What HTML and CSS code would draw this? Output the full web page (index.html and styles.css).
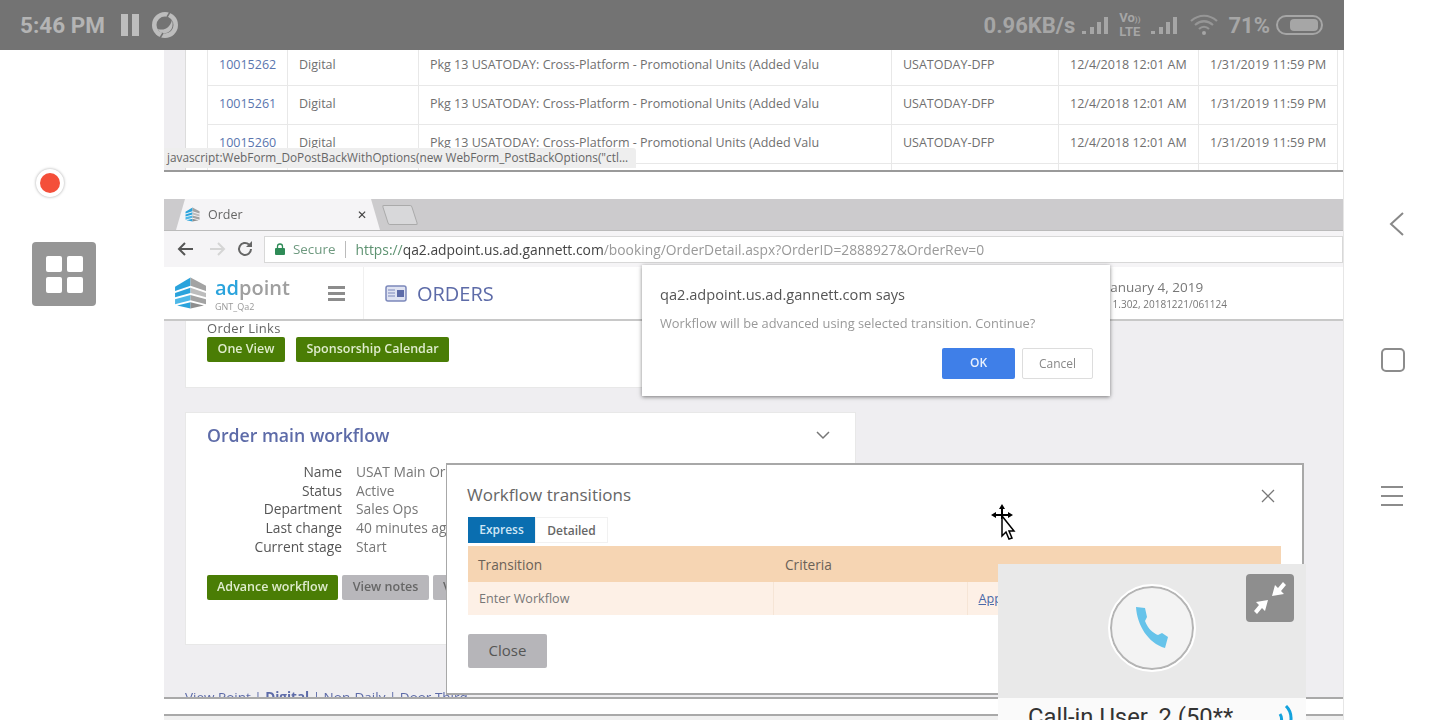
FILE: index.html
```html
<!DOCTYPE html>
<html lang="en">
<head>
  <meta charset="UTF-8" />
  <meta name="viewport" content="width=device-width, initial-scale=1.0" />
  <title>Screen recording</title>
  <link rel="stylesheet" href="styles.css">
</head>
<body>
  <svg class="defs" width="0" height="0">
    <symbol id="adlogo" viewBox="0 0 32 32">
      <path d="M1 10 16 1l0 8L1 14z" fill="#2aa3dc"/>
      <path d="M16 1l15 8v5L16 9z" fill="#a3a3a3"/>
      <path d="M1 16 16 11l0 5L1 20z" fill="#2aa3dc"/>
      <path d="M16 11l15 5v4L16 16z" fill="#bdbdbd"/>
      <path d="M1 22 16 18v5L1 27z" fill="#4db8e8"/>
      <path d="M16 18l15 4v5L16 23z" fill="#a3a3a3"/>
      <path d="M3 28 16 25v6z" fill="#2aa3dc"/>
      <path d="M16 25l13 3-13 3z" fill="#8e8e8e"/>
    </symbol>
    <symbol id="bars" viewBox="0 0 28 20">
      <rect x="1" y="16" width="4" height="3"/>
      <rect x="9" y="12" width="4" height="7"/>
      <rect x="16" y="7" width="4" height="12"/>
      <rect x="23" y="2" width="4" height="17"/>
    </symbol>
  </svg>

  <div class="screen">
    <div class="main">
      <header class="statusbar">
        <span class="clock">5:46 PM</span>
        <span class="pause"><i></i><i></i></span>
        <svg class="sync" width="26" height="26" viewBox="0 0 26 26">
          <circle cx="13" cy="13" r="13" fill="#bdbdbd"/>
          <circle cx="13" cy="13" r="8.500" fill="#737373"/>
          <path d="M6 17c6 2 12-1 14-9 2 7-1 12-6 13-4 1-7-1-8-4z" fill="#bdbdbd"/>
          <path d="M15 5l3-5M11 21l-3 5" stroke="#737373" stroke-width="1.500"/>
        </svg>
        <span class="speed">0.96KB/s</span>
        <svg class="sig" width="28" height="20"><use href="#bars"/></svg>
        <span class="volte">Vo<small>))</small><br>LTE</span>
        <svg class="sig sig-two" width="28" height="20"><use href="#bars"/></svg>
        <svg class="wifi" width="30" height="24" viewBox="0 0 30 24" fill="none" stroke="#969696" stroke-width="2.200">
          <path d="M1 8c8-7 18-7 26 0"/>
          <path d="M5 12c6-5 12-5 18 0"/>
          <path d="M9 16c3-3 7-3 10 0"/>
          <circle cx="14" cy="20" r="2" fill="#a6a6a6" stroke="none"/>
        </svg>
        <span class="percent">71%</span>
        <span class="battery"><i></i></span>
      </header>

      <div class="workarea">
        <aside class="left-rail">
          <span class="record"><i></i></span>
          <span class="apps"><i></i><i></i><i></i><i></i></span>
        </aside>

        <div class="stage">
          <div class="capture">
            <section class="orders-list">
              <table class="lines">
                <colgroup>
                  <col class="c1"><col class="c2"><col class="c3"><col class="c4"><col class="c5"><col class="c6">
                </colgroup>
                <tr>
                  <td><a>10015262</a></td><td>Digital</td>
                  <td>Pkg 13 USATODAY: Cross-Platform - Promotional Units (Added Valu</td>
                  <td>USATODAY-DFP</td><td>12/4/2018 12:01 AM</td><td>1/31/2019 11:59 PM</td>
                </tr>
                <tr>
                  <td><a>10015261</a></td><td>Digital</td>
                  <td>Pkg 13 USATODAY: Cross-Platform - Promotional Units (Added Valu</td>
                  <td>USATODAY-DFP</td><td>12/4/2018 12:01 AM</td><td>1/31/2019 11:59 PM</td>
                </tr>
                <tr>
                  <td><a>10015260</a></td><td>Digital</td>
                  <td>Pkg 13 USATODAY: Cross-Platform - Promotional Units (Added Valu</td>
                  <td>USATODAY-DFP</td><td>12/4/2018 12:01 AM</td><td>1/31/2019 11:59 PM</td>
                </tr>
                <tr><td></td><td></td><td></td><td></td><td></td><td></td></tr>
              </table>
              <div class="link-hint">javascript:WebForm_DoPostBackWithOptions(new WebForm_PostBackOptions("ctl...</div>
            </section>

            <div class="browser">
              <div class="tabstrip">
                <div class="tab">
                  <svg class="favicon" width="15" height="17"><use href="#adlogo"/></svg>
                  <span class="tab-title">Order</span>
                  <span class="tab-close">✕</span>
                </div>
                <span class="newtab"></span>
              </div>

              <div class="toolbar">
                <svg class="nav-icon" width="18" height="16" viewBox="0 0 18 16" fill="none" stroke="#555" stroke-width="2">
                  <path d="M16 8H2M8 2 2 8l6 6"/>
                </svg>
                <svg class="nav-icon" width="18" height="16" viewBox="0 0 18 16" fill="none" stroke="#d5d5d5" stroke-width="2">
                  <path d="M2 8h14M10 2l6 6-6 6"/>
                </svg>
                <svg class="nav-icon nav-reload" width="18" height="18" viewBox="0 0 18 18" fill="none" stroke="#666" stroke-width="2">
                  <path d="M15 9a6 6 0 1 1-2-4.500"/>
                  <path d="M16 1v6h-6z" fill="#666" stroke="none"/>
                </svg>
                <div class="omnibox">
                  <svg width="10" height="12" viewBox="0 0 10 12">
                    <path d="M2.500 5V3.500a2.500 2.500 0 0 1 5 0V5" fill="none" stroke="#2e8b57" stroke-width="1.300"/>
                    <rect y="5" width="10" height="7" rx="1" fill="#2e8b57"/>
                  </svg>
                  <span class="secure">Secure</span>
                  <span class="url"><b>https://</b><em>qa2.adpoint.us.ad.gannett.com</em>/booking/OrderDetail.aspx?OrderID=2888927&amp;OrderRev=0</span>
                </div>
              </div>

              <div class="app-header">
                <svg class="logo" width="33" height="34"><use href="#adlogo"/></svg>
                <div class="brand">
                  <div class="brand-name"><span>ad</span>point</div>
                  <div class="brand-sub">GNT_Qa2</div>
                </div>
                <span class="burger"><i></i><i></i><i></i></span>
                <svg class="orders-icon" width="22" height="17" viewBox="0 0 22 17">
                  <rect x="1" y="1" width="20" height="15" rx="2" fill="#dfe3f2" stroke="#7c88bb" stroke-width="1.500"/>
                  <rect x="12" y="5" width="7" height="7" fill="#5d6ba8"/>
                  <path d="M3 5h7M3 8h7M3 11h7" stroke="#7c88bb"/>
                </svg>
                <span class="orders-title">ORDERS</span>
                <div class="session">
                  <div class="session-date">January 4, 2019</div>
                  <div class="session-build">1.302, 20181221/061124</div>
                </div>
              </div>

              <div class="page">
                <section class="card card-links">
                  <h4>Order Links</h4>
                  <div class="btn-row">
                    <a class="btn btn-green btn-oneview">One View</a>
                    <a class="btn btn-green btn-calendar">Sponsorship Calendar</a>
                  </div>
                </section>

                <section class="card card-workflow">
                  <div class="card-head">
                    <h3>Order main workflow</h3>
                    <svg width="14" height="9" viewBox="0 0 14 9" fill="none" stroke="#777" stroke-width="1.500">
                      <path d="M1 1l6 6 6-6"/>
                    </svg>
                  </div>
                  <dl class="details">
                    <dt>Name</dt><dd>USAT Main Order</dd>
                    <dt>Status</dt><dd>Active</dd>
                    <dt>Department</dt><dd>Sales Ops</dd>
                    <dt>Last change</dt><dd>40 minutes ago</dd>
                    <dt>Current stage</dt><dd>Start</dd>
                  </dl>
                  <div class="btn-row btn-row-tight">
                    <a class="btn btn-green btn-advance">Advance workflow</a>
                    <a class="btn btn-gray btn-notes">View notes</a>
                    <a class="btn btn-gray">View</a>
                  </div>
                </section>

                <div class="page-foot">View Point | <b>Digital</b> | Non-Daily | Door Third</div>

                <div class="modal">
                  <div class="modal-head">
                    <h3>Workflow transitions</h3>
                    <svg class="modal-x" width="14" height="14" viewBox="0 0 14 14" stroke="#777" stroke-width="1.300">
                      <path d="M1 1l12 12M13 1 1 13"/>
                    </svg>
                  </div>
                  <div class="tabs">
                    <span class="pill pill-on">Express</span>
                    <span class="pill">Detailed</span>
                  </div>
                  <table class="transitions">
                    <colgroup><col class="t1"><col class="t2"><col></colgroup>
                    <tr><th>Transition</th><th>Criteria</th><th></th></tr>
                    <tr><td>Enter Workflow</td><td></td><td><a>Apply</a></td></tr>
                  </table>
                  <a class="btn-close">Close</a>
                </div>
              </div>

              <div class="alert">
                <div class="alert-title">qa2.adpoint.us.ad.gannett.com says</div>
                <div class="alert-text">Workflow will be advanced using selected transition. Continue?</div>
                <div class="alert-actions">
                  <a class="alert-ok">OK</a>
                  <a class="alert-cancel">Cancel</a>
                </div>
              </div>
            </div>

            <div class="tray"></div>
          </div>

          <svg class="cursor" width="28" height="38" viewBox="0 0 28 38">
            <path d="M12 1l-3 5h2v5H6V9l-5 3 5 3v-2h5v3h2v-3h5v2l5-3-5-3v2h-5V6h2z" fill="#000"/>
            <path d="M12 13v20l4-4 3 7 3-1-3-7h5z" fill="#fff" stroke="#000" stroke-width="1.500"/>
          </svg>

          <div class="call">
            <div class="call-top">
              <span class="call-ring">
                <svg width="32" height="42" viewBox="0 0 32 42">
                  <path d="M0 0 9 1l2 9-2 4c3 8 8 12 13 14l4-2 6 4-3 11C12 36 1 18 0 0z" fill="#66c3ea"/>
                </svg>
              </span>
              <span class="call-shrink">
                <svg width="34" height="34" viewBox="0 0 34 34" fill="#fff">
                  <path d="M19 15 22 4l3 3 5-6 3 3-5 6 3 3z"/>
                  <path d="M15 19 12 30l-3-3-5 6-3-3 5-6-3-3z"/>
                </svg>
              </span>
            </div>
            <div class="call-name">
              <span>Call-in User_2 (50**</span>
              <svg width="16" height="20" viewBox="0 0 16 20" fill="none" stroke="#13a2dd" stroke-width="3">
                <path d="M2 9c2 3 2 7 0 11"/>
                <path d="M8 1c5 5 6 12 4 19"/>
              </svg>
            </div>
          </div>
        </div>
      </div>
    </div>

    <nav class="nav-rail">
      <svg width="16" height="24" viewBox="0 0 16 24" fill="none" stroke="#888" stroke-width="2">
        <path d="M14 1 2 12l12 11"/>
      </svg>
      <span class="nav-square"></span>
      <span class="nav-menu"><i></i><i></i><i></i></span>
    </nav>
  </div>
</body>
</html>
```

FILE: styles.css
```css
* {
  box-sizing: border-box;
}

html,
body {
  margin: 0;
  padding: 0;
  height: 100%;
  overflow: hidden;
  background-color: #fff;
}

body {
  font-family: "Open Sans", Arial, sans-serif;
  color: #555;
}

.defs {
  position: absolute;
}

.screen {
  display: flex;
  width: 1440px;
  height: 720px;
  overflow: hidden;
}

.main {
  display: flex;
  flex-direction: column;
  width: 1344px;
}

/* status bar */
.statusbar {
  display: flex;
  align-items: center;
  flex: none;
  height: 50px;
  padding: 0 21px 0 20px;
  background-color: #737373;
  color: #b4b4b4;
  font-family: Roboto, sans-serif;
  font-weight: 700;
}

.clock {
  font-size: 22.500px;
}

.pause {
  display: flex;
  gap: 4px;
  margin-left: 16px;
}

.pause i {
  width: 7px;
  height: 22px;
  background-color: #bdbdbd;
}

.sync {
  margin-left: 13px;
}

.speed {
  margin-left: auto;
  font-size: 22px;
  color: #a6a6a6;
}

.sig {
  margin-left: 6px;
  fill: #a6a6a6;
}

.sig-two {
  margin-left: 10px;
}

.volte {
  margin-left: 10px;
  font-size: 13px;
  line-height: 12px;
  color: #a6a6a6;
}

.volte small {
  font-size: 8px;
}

.wifi {
  margin-left: 12px;
}

.percent {
  margin-left: 8px;
  font-size: 22px;
  color: #a6a6a6;
}

.battery {
  display: flex;
  align-items: center;
  justify-content: flex-end;
  width: 47px;
  height: 20px;
  margin-left: 6px;
  padding-right: 3px;
  border: 2px solid #a6a6a6;
  border-radius: 10px;
}

.battery i {
  width: 28px;
  height: 12px;
  border-radius: 4px;
  background-color: #a6a6a6;
}

.workarea {
  display: flex;
  flex: 1;
  min-height: 0;
}

/* left rail */
.left-rail {
  display: flex;
  flex-direction: column;
  flex: none;
  width: 164px;
  padding: 119px 0 0 32px;
}

.record {
  display: flex;
  align-items: center;
  justify-content: center;
  width: 28px;
  height: 28px;
  margin-left: 4px;
  border-radius: 50%;
  background-color: #fff;
  box-shadow: 0 0 3px rgba(0, 0, 0, 0.35);
}

.record i {
  width: 20px;
  height: 20px;
  border-radius: 50%;
  background-color: #f44f3a;
}

.apps {
  display: grid;
  grid-template-columns: 16px 16px;
  grid-auto-rows: 16px;
  gap: 5px;
  align-content: center;
  justify-content: center;
  width: 64px;
  height: 64px;
  margin-top: 45px;
  border-radius: 4px;
  background-color: #969696;
}

.apps i {
  border-radius: 2px;
  background-color: #fff;
}

/* captured page */
.stage {
  position: relative;
  flex: 1;
  min-width: 0;
  border-right: 1px solid #e6e6e6;
}

.capture {
  display: flex;
  flex-direction: column;
  height: 100%;
  overflow: hidden;
  filter: blur(0.5px);
}

.orders-list {
  position: relative;
  flex: none;
  height: 122px;
  padding-left: 43px;
  overflow: hidden;
  border-bottom: 2px solid #9a9a9a;
  background: linear-gradient(to right, #efeef1 21px, #dcdcdc 21px, #dcdcdc 22px, #fff 22px);
  font-size: 12.500px;
}

.lines {
  width: 1130px;
  margin-top: -4px;
  border-collapse: collapse;
  table-layout: fixed;
}

.lines td {
  height: 39px;
  padding: 0 11px 3px;
  border: 1px solid #e8e8e8;
  color: #707070;
  white-space: nowrap;
  overflow: hidden;
}

.lines a {
  color: #5a75ae;
}

.c1 { width: 80px; }
.c2 { width: 131px; }
.c3 { width: 473px; }
.c4 { width: 167px; }
.c5 { width: 140px; }
.c6 { width: 139px; }

.link-hint {
  position: absolute;
  left: 0;
  bottom: 2px;
  width: 472px;
  height: 20px;
  padding: 1px 0 0 3px;
  border-top-right-radius: 3px;
  background-color: #eeeeee;
  color: #666;
  font-size: 11.800px;
  white-space: nowrap;
}

.browser {
  position: relative;
  display: flex;
  flex-direction: column;
  flex: none;
  height: 498px;
  margin-top: 27px;
}

.tabstrip {
  display: flex;
  align-items: flex-end;
  flex: none;
  height: 32px;
  padding-left: 12px;
  background-color: #cccbcd;
  border-bottom: 1px solid #bbb;
}

.tab {
  display: flex;
  align-items: center;
  width: 204px;
  height: 31px;
  padding: 0 0 0 9px;
  background-color: #f5f4f6;
  clip-path: polygon(0 100%, 9px 0, 195px 0, 100% 100%);
  font-size: 12.500px;
}

.favicon {
  flex: none;
}

.tab-title {
  margin-left: 8px;
  color: #666;
}

.tab-close {
  margin-left: 114px;
  color: #444;
  font-size: 12px;
}

.newtab {
  width: 30px;
  height: 20px;
  margin: 0 0 5px 5px;
  border: 1px solid #aaa;
  border-radius: 2px;
  background-color: #d8d8da;
  transform: skewX(18deg);
}

.toolbar {
  display: flex;
  align-items: center;
  flex: none;
  gap: 13px;
  height: 36px;
  padding-left: 13px;
  background-color: #f5f4f6;
}

.nav-reload {
  margin-left: -3px;
}

.omnibox {
  display: flex;
  align-items: center;
  flex: 1;
  height: 27px;
  margin-left: -3px;
  padding-left: 10px;
  border: 1px solid #d8d8d8;
  background-color: #fff;
  font-size: 13px;
  white-space: nowrap;
}

.secure {
  margin-left: 8px;
  padding-right: 10px;
  border-right: 1px solid #bbb;
  color: #6f9a80;
  font-size: 13.400px;
  line-height: 17px;
}

.url {
  margin-left: 9px;
  color: #999;
  font-size: 13.850px;
}

.url b {
  color: #5d9271;
  font-weight: 400;
}

.url em {
  color: #444;
  font-style: normal;
}

.app-header {
  display: flex;
  align-items: center;
  flex: none;
  height: 54px;
  padding: 0 116px 0 10px;
  border-bottom: 2px solid #c8c8c8;
  background-color: #fff;
}

.brand {
  margin-left: 8px;
}

.brand-name {
  color: #9f9f9f;
  font-size: 20px;
  font-weight: 600;
  line-height: 27px;
}

.brand-name span {
  color: #2aa3dc;
}

.brand-sub {
  color: #999;
  font-size: 9px;
  line-height: 12px;
}

.burger {
  display: flex;
  flex-direction: column;
  gap: 3px;
  margin-left: 38px;
  padding-right: 18px;
  border-right: 1px solid #f0f0f0;
  height: 52px;
  justify-content: center;
}

.burger i {
  width: 17px;
  height: 3px;
  background-color: #8c8c8c;
}

.orders-icon {
  margin-left: 21px;
}

.orders-title {
  margin-left: 10px;
  color: #5d6ba8;
  font-size: 20px;
}

.session {
  margin-left: auto;
  padding-top: 4px;
  color: #777;
}

.session-date {
  margin-left: -6px;
  font-size: 13.500px;
  line-height: 18px;
  white-space: nowrap;
}

.session-build {
  font-size: 10px;
  line-height: 16px;
}

.page {
  position: relative;
  flex: 1;
  min-height: 0;
  padding-left: 21px;
  overflow: hidden;
  background-color: #efeef1;
}

.card {
  width: 671px;
  padding: 0 21px;
  border: 1px solid #e8e8e8;
  background-color: #fff;
}

.card-links {
  height: 67px;
  border-top: none;
}

.card-links h4 {
  margin: 0 0 2px;
  color: #666;
  font-size: 13px;
  font-weight: 400;
  letter-spacing: 0.3px;
  line-height: 14px;
}

.btn-row {
  display: flex;
  gap: 11px;
}

.btn-row-tight {
  gap: 4px;
  margin-top: 18px;
  white-space: nowrap;
}

.btn {
  display: block;
  height: 25px;
  padding: 0 10px;
  border-radius: 2px;
  font-size: 12.500px;
  font-weight: 600;
  line-height: 24px;
  text-align: center;
  white-space: nowrap;
}

.btn-green {
  background-color: #4a7d05;
  color: #dfeccd;
}

.btn-gray {
  background-color: #b8b7bb;
  color: #666;
}

.btn-oneview { width: 78px; }
.btn-calendar { width: 153px; }
.btn-advance { width: 131px; }
.btn-notes { width: 87px; }

.card-workflow {
  height: 233px;
  margin-top: 24px;
}

.card-head {
  display: flex;
  align-items: center;
  justify-content: space-between;
  height: 44px;
  padding-right: 4px;
}

.card-head h3 {
  margin: 0;
  color: #5d6ba8;
  font-size: 17.700px;
  font-weight: 600;
  white-space: nowrap;
}

.details {
  display: grid;
  grid-template-columns: 135px 1fr;
  column-gap: 14px;
  margin: 6px 0 0;
  font-size: 13.800px;
  line-height: 18.700px;
}

.details dt {
  color: #555;
  text-align: right;
}

.details dd {
  margin: 0;
  color: #777;
}

.page-foot {
  margin: 43px 0 0;
  color: #5d6ba8;
  font-size: 13.500px;
  white-space: nowrap;
}

/* workflow dialog */
.modal {
  position: absolute;
  left: 282px;
  top: 142px;
  width: 858px;
  height: 232px;
  padding: 0 20px 0 21px;
  border: 2px solid #a8a8a8;
  border-left-width: 1px;
  background-color: #fff;
}

.modal-head {
  display: flex;
  align-items: center;
  justify-content: space-between;
  height: 52px;
  padding: 6px 7px 0 0;
  margin-left: -1px;
}

.modal-head h3 {
  margin: 0;
  color: #666;
  font-size: 17px;
  font-weight: 400;
}

.modal-x {
  margin-top: 4px;
}

.tabs {
  display: flex;
  height: 26px;
}

.pill {
  width: 73px;
  background-color: #fff;
  border: 1px solid #f1f1f1;
  color: #666;
  font-size: 12px;
  font-weight: 600;
  line-height: 25px;
  text-align: center;
}

.pill-on {
  width: 67px;
  border: none;
  background-color: #0a6eb0;
  color: #cfe6f5;
}

.transitions {
  width: 813px;
  margin-top: 3px;
  border-collapse: collapse;
  table-layout: fixed;
  font-size: 13.700px;
}

.t1 { width: 305px; }
.t2 { width: 194px; }

.transitions th {
  height: 36px;
  padding: 0 10px;
  background-color: #f6d5b3;
  color: #6b6258;
  font-weight: 400;
  text-align: left;
}

.transitions th:nth-child(2) {
  padding-left: 12px;
}

.transitions td {
  height: 33px;
  padding: 0 10px 0 11px;
  border-right: 1px solid #f6e5d6;
  background-color: #fdf0e6;
  color: #777;
  font-size: 12.600px;
}

.transitions a {
  color: #4a68a8;
  text-decoration: underline;
}

.btn-close {
  display: block;
  width: 79px;
  height: 34px;
  margin-top: 19px;
  border-radius: 2px;
  background-color: #b6b5b9;
  color: #555;
  font-size: 15px;
  line-height: 33px;
  text-align: center;
}

/* browser alert */
.alert {
  position: absolute;
  left: 478px;
  top: 66px;
  width: 468px;
  height: 131px;
  padding: 20px 17px 0 18px;
  background-color: #fff;
  box-shadow: 0 1px 4px rgba(0, 0, 0, 0.5);
}

.alert-title {
  color: #555;
  font-size: 14.600px;
  line-height: 18px;
}

.alert-text {
  margin-top: 12px;
  color: #999;
  font-size: 12.850px;
  line-height: 17px;
}

.alert-actions {
  display: flex;
  justify-content: flex-end;
  gap: 7px;
  margin-top: 16px;
  font-size: 12px;
  line-height: 29px;
  text-align: center;
}

.alert-ok {
  width: 73px;
  height: 31px;
  border-radius: 2px;
  background-color: #3f7fe8;
  color: #e8f0fd;
  font-weight: 600;
}

.alert-cancel {
  width: 71px;
  height: 31px;
  border: 1px solid #ddd;
  border-radius: 2px;
  color: #888;
}

.tray {
  flex: none;
  height: 15px;
  border-top: 2px solid #a9a9a9;
  background-color: #fff;
}

.tray::after {
  content: "";
  display: block;
  height: 21px;
  margin-top: 15px;
  border-top: 2px solid #a9a9a9;
  background-color: #f0f0f0;
}

/* pointer and call widget */
.cursor {
  position: absolute;
  left: 826px;
  top: 453px;
}

.call {
  position: absolute;
  left: 834px;
  top: 514px;
  width: 308px;
  height: 156px;
  overflow: hidden;
  background-color: #fafafa;
}

.call-top {
  position: relative;
  display: flex;
  align-items: center;
  justify-content: center;
  height: 134px;
  background-color: #e9e9e9;
}

.call-ring {
  display: flex;
  align-items: center;
  justify-content: center;
  width: 84px;
  height: 84px;
  margin-top: -6px;
  border: 2px solid #b4b4b4;
  border-radius: 50%;
  outline: 2px solid #fff;
  background-color: #f3f3f3;
}

.call-shrink {
  position: absolute;
  top: 10px;
  right: 12px;
  display: flex;
  align-items: center;
  justify-content: center;
  width: 48px;
  height: 48px;
  border-radius: 4px;
  background-color: #8e8e8e;
}

.call-name {
  display: flex;
  justify-content: space-between;
  align-items: flex-start;
  padding: 7px 12px 0 30px;
  color: #333;
  font-family: Roboto, sans-serif;
  font-size: 23.800px;
  line-height: 24px;
  white-space: nowrap;
}

/* android nav */
.nav-rail {
  display: flex;
  flex-direction: column;
  flex: none;
  width: 96px;
  padding: 212px 0 0 37px;
}

.nav-rail svg {
  margin-left: 8px;
}

.nav-square {
  width: 24px;
  height: 24px;
  margin-top: 112px;
  border: 2px solid #8c8c8c;
  border-radius: 5px;
}

.nav-menu {
  display: flex;
  flex-direction: column;
  gap: 7px;
  margin-top: 114px;
}

.nav-menu i {
  width: 22px;
  height: 2px;
  background-color: #8c8c8c;
}
```
